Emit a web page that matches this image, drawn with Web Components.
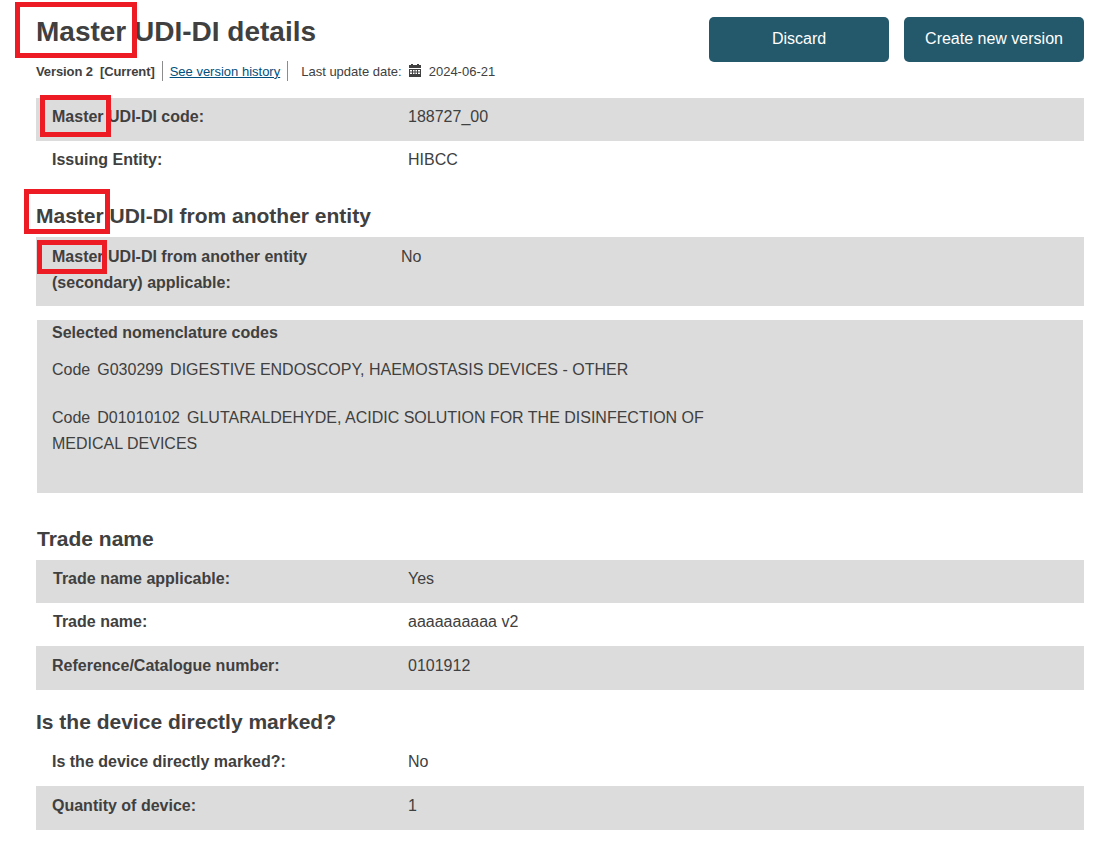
<!DOCTYPE html>
<html>
<head>
<meta charset="utf-8">
<style>
html,body{margin:0;padding:0;background:#fff;}
body{font-family:"Liberation Sans",Arial,sans-serif;color:#404040;width:1116px;height:847px;overflow:hidden;position:relative;}
</style>
</head>
<body>
<page-head>
	<span slot="title">Master UDI-DI details</span>
	<app-button slot="actions">Discard</app-button>
	<app-button slot="actions">Create new version</app-button>
</page-head>

<data-row shade style="--row-h:43px">
	<span slot="label">Master UDI-DI code:</span>188727_00
</data-row>
<data-row style="--row-h:43px">
	<span slot="label">Issuing Entity:</span>HIBCC
</data-row>

<section-title style="--top:20px;--bottom:9px;--left:36px">Master UDI-DI from another entity</section-title>
<data-row shade style="--row-h:69px;--value-left:365px;--pad-top:7px;--lh:25.5px;--label-w:290px">
	<span slot="label">Master UDI-DI from another entity (secondary) applicable:</span>No
</data-row>

<code-list>
	<code-item code="G030299"><span>DIGESTIVE ENDOSCOPY, HAEMOSTASIS DEVICES - OTHER</span></code-item>
	<code-item code="D01010102"><span>GLUTARALDEHYDE, ACIDIC SOLUTION FOR THE DISINFECTION OF</span><br><span>MEDICAL DEVICES</span></code-item>
</code-list>

<section-title style="--top:34px;--bottom:9px;--left:37px">Trade name</section-title>
<data-row shade style="--row-h:43px;--label-left:17px">
	<span slot="label">Trade name applicable:</span>Yes
</data-row>
<data-row style="--row-h:43px;--label-left:17px">
	<span slot="label">Trade name:</span>aaaaaaaaaa v2
</data-row>
<data-row shade style="--row-h:44px;--label-left:16px;--lh:40px">
	<span slot="label">Reference/Catalogue number:</span>0101912
</data-row>

<section-title style="--top:20px;--bottom:8px;--left:36px">Is the device directly marked?</section-title>
<data-row style="--row-h:44px;--lh:40px">
	<span slot="label">Is the device directly marked?:</span>No
</data-row>
<data-row shade style="--row-h:44px;--lh:40px">
	<span slot="label">Quantity of device:</span>1
</data-row>

<!-- red annotation boxes drawn over the screenshot -->
<mark-box style="left:15px;top:2px;width:122px;height:56px"></mark-box>
<mark-box style="left:40px;top:95px;width:71px;height:42px"></mark-box>
<mark-box style="left:24px;top:189px;width:86px;height:45px"></mark-box>
<mark-box style="left:37px;top:240px;width:70px;height:34px"></mark-box>

<script>
function shadow(el, html){
	el.attachShadow({mode: 'open'}).innerHTML = html;
}

customElements.define('app-button', class extends HTMLElement {
	constructor(){
		super();
		shadow(this, `<style>
			:host{display:flex;align-items:center;justify-content:center;width:180px;height:45px;box-sizing:border-box;padding-bottom:1px;
				background:#24586b;border-radius:5px;color:#fff;font-size:16px;cursor:pointer;}
		</style><slot></slot>`);
	}
});

customElements.define('page-head', class extends HTMLElement {
	constructor(){
		super();
		shadow(this, `<style>
			:host{display:flex;justify-content:space-between;height:98px;box-sizing:border-box;padding:0 32px 0 36px;}
			h1{margin:0;padding-top:16px;font-size:28px;line-height:32px;font-weight:bold;color:#404040;}
			.meta{display:flex;align-items:center;height:20px;margin-top:13px;font-size:13px;color:#404040;}
			.ver{font-weight:bold;white-space:pre;letter-spacing:-0.1px;}
			a{color:#004f7c;text-decoration:underline;}
			.sep{width:1px;height:20px;background:#8c8c8c;}
			.link{padding:0 7px;}
			.date{padding-left:13px;}
			svg{width:12px;height:13px;margin:-2px 8px 0 7px;fill:#404040;}
			.actions{display:flex;gap:15px;padding-top:17px;}
		</style>
		<div>
			<h1><slot name="title"></slot></h1>
			<div class="meta">
				<span class="ver">Version 2  [Current]</span>
				<span class="sep" style="margin-left:7px"></span>
				<span class="link"><a href="#">See version history</a></span>
				<span class="sep"></span>
				<span class="date">Last update date:</span>
				<svg viewBox="0 0 12 13">
					<path d="M2 0h2v1h4V0h2v1h2v3H0V1h2z"/>
					<path d="M0 5h12v8H0zM1 6v1.500h2V6zM4 6v1.500h1.500V6zM6.500 6v1.500H8V6zM9 6v1.500h2V6zM1 8.500V10h2V8.500zM4 8.500V10h1.500V8.500zM6.500 8.500V10H8V8.500zM9 8.500V10h2V8.500z" fill-rule="evenodd"/>
				</svg>
				<span>2024-06-21</span>
			</div>
		</div>
		<div class="actions"><slot name="actions"></slot></div>`);
	}
});

customElements.define('data-row', class extends HTMLElement {
	constructor(){
		super();
		shadow(this, `<style>
			:host{display:flex;box-sizing:border-box;height:var(--row-h,43px);margin:0 32px 0 36px;padding-top:var(--pad-top,0);
				font-size:16px;line-height:var(--lh,38px);color:#404040;}
			:host([shade]){background:#dcdcdc;}
			.label{flex:none;box-sizing:border-box;width:var(--value-left,372px);padding-left:var(--label-left,16px);font-weight:bold;}
			.label ::slotted(*){display:block;max-width:var(--label-w,none);}
		</style>
		<div class="label"><slot name="label"></slot></div>
		<div><slot></slot></div>`);
	}
});

customElements.define('section-title', class extends HTMLElement {
	constructor(){
		super();
		shadow(this, `<style>
			:host{display:block;margin:var(--top,16px) 0 var(--bottom,8px) var(--left,36px);font-size:21px;line-height:24px;font-weight:bold;color:#404040;}
		</style><slot></slot>`);
	}
});

customElements.define('code-list', class extends HTMLElement {
	constructor(){
		super();
		shadow(this, `<style>
			:host{display:block;box-sizing:border-box;height:173px;margin:14px 33px 0 37px;padding:3px 15px 0;background:#dcdcdc;font-size:16px;color:#404040;}
			h3{margin:0 0 14px;font-size:16px;line-height:20px;font-weight:bold;}
		</style>
		<h3>Selected nomenclature codes</h3>
		<slot></slot>`);
	}
});

customElements.define('code-item', class extends HTMLElement {
	constructor(){
		super();
		shadow(this, `<style>
			:host{display:block;line-height:26px;margin-bottom:22px;white-space:nowrap;}
			span{margin-right:7px;}
		</style>
		<span>Code</span><span>${this.getAttribute('code')}</span><slot></slot>`);
	}
});

customElements.define('mark-box', class extends HTMLElement {
	constructor(){
		super();
		shadow(this, `<style>
			:host{position:absolute;box-sizing:border-box;border:5px solid #ed1c24;}
		</style>`);
	}
});
</script>
</body>
</html>
